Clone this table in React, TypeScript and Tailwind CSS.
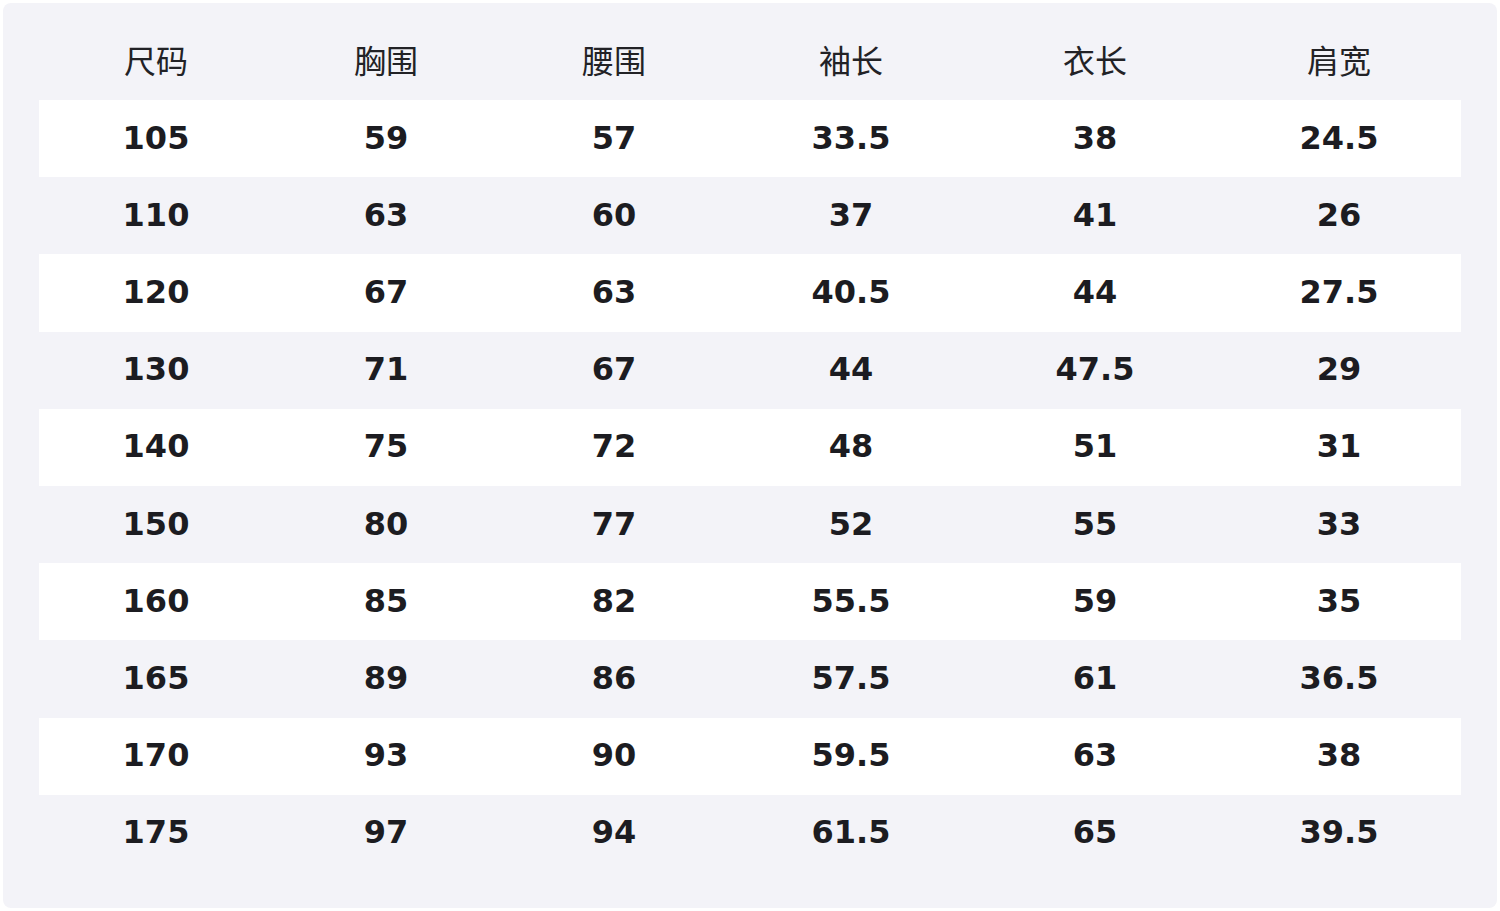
const headers = ['尺码', '胸围', '腰围', '袖长', '衣长', '肩宽']

const rows = [
  ['105', '59', '57', '33.5', '38', '24.5'],
  ['110', '63', '60', '37', '41', '26'],
  ['120', '67', '63', '40.5', '44', '27.5'],
  ['130', '71', '67', '44', '47.5', '29'],
  ['140', '75', '72', '48', '51', '31'],
  ['150', '80', '77', '52', '55', '33'],
  ['160', '85', '82', '55.5', '59', '35'],
  ['165', '89', '86', '57.5', '61', '36.5'],
  ['170', '93', '90', '59.5', '63', '38'],
  ['175', '97', '94', '61.5', '65', '39.5'],
]

const cols = 'grid grid-cols-[234px_226px_230px_244px_244px_244px]'

export default function App() {
  return (
    <div className="w-[1500px] h-[911px] bg-white p-[3px]">
      <div className="h-[905px] rounded-lg bg-[#f3f3f8] pt-[21px] px-[36px]">
        <div className={`${cols} h-[76px] items-center pb-[6px]`}>
          {headers.map((h) => (
            <div
              key={h}
              className="text-center text-[32px] text-[#222226] font-['Noto_Sans_CJK_SC',sans-serif] leading-none"
            >
              {h}
            </div>
          ))}
        </div>
        {rows.map((r, i) => (
          <div
            key={r[0]}
            className={`${cols} h-[77.2px] items-center pb-[2px] ${i % 2 === 0 ? 'bg-white' : ''}`}
          >
            {r.map((v, j) => (
              <div
                key={j}
                className="text-center text-[32px] font-bold text-[#1c1c21] font-['DejaVu_Sans',sans-serif] leading-none"
              >
                {v}
              </div>
            ))}
          </div>
        ))}
      </div>
    </div>
  )
}
